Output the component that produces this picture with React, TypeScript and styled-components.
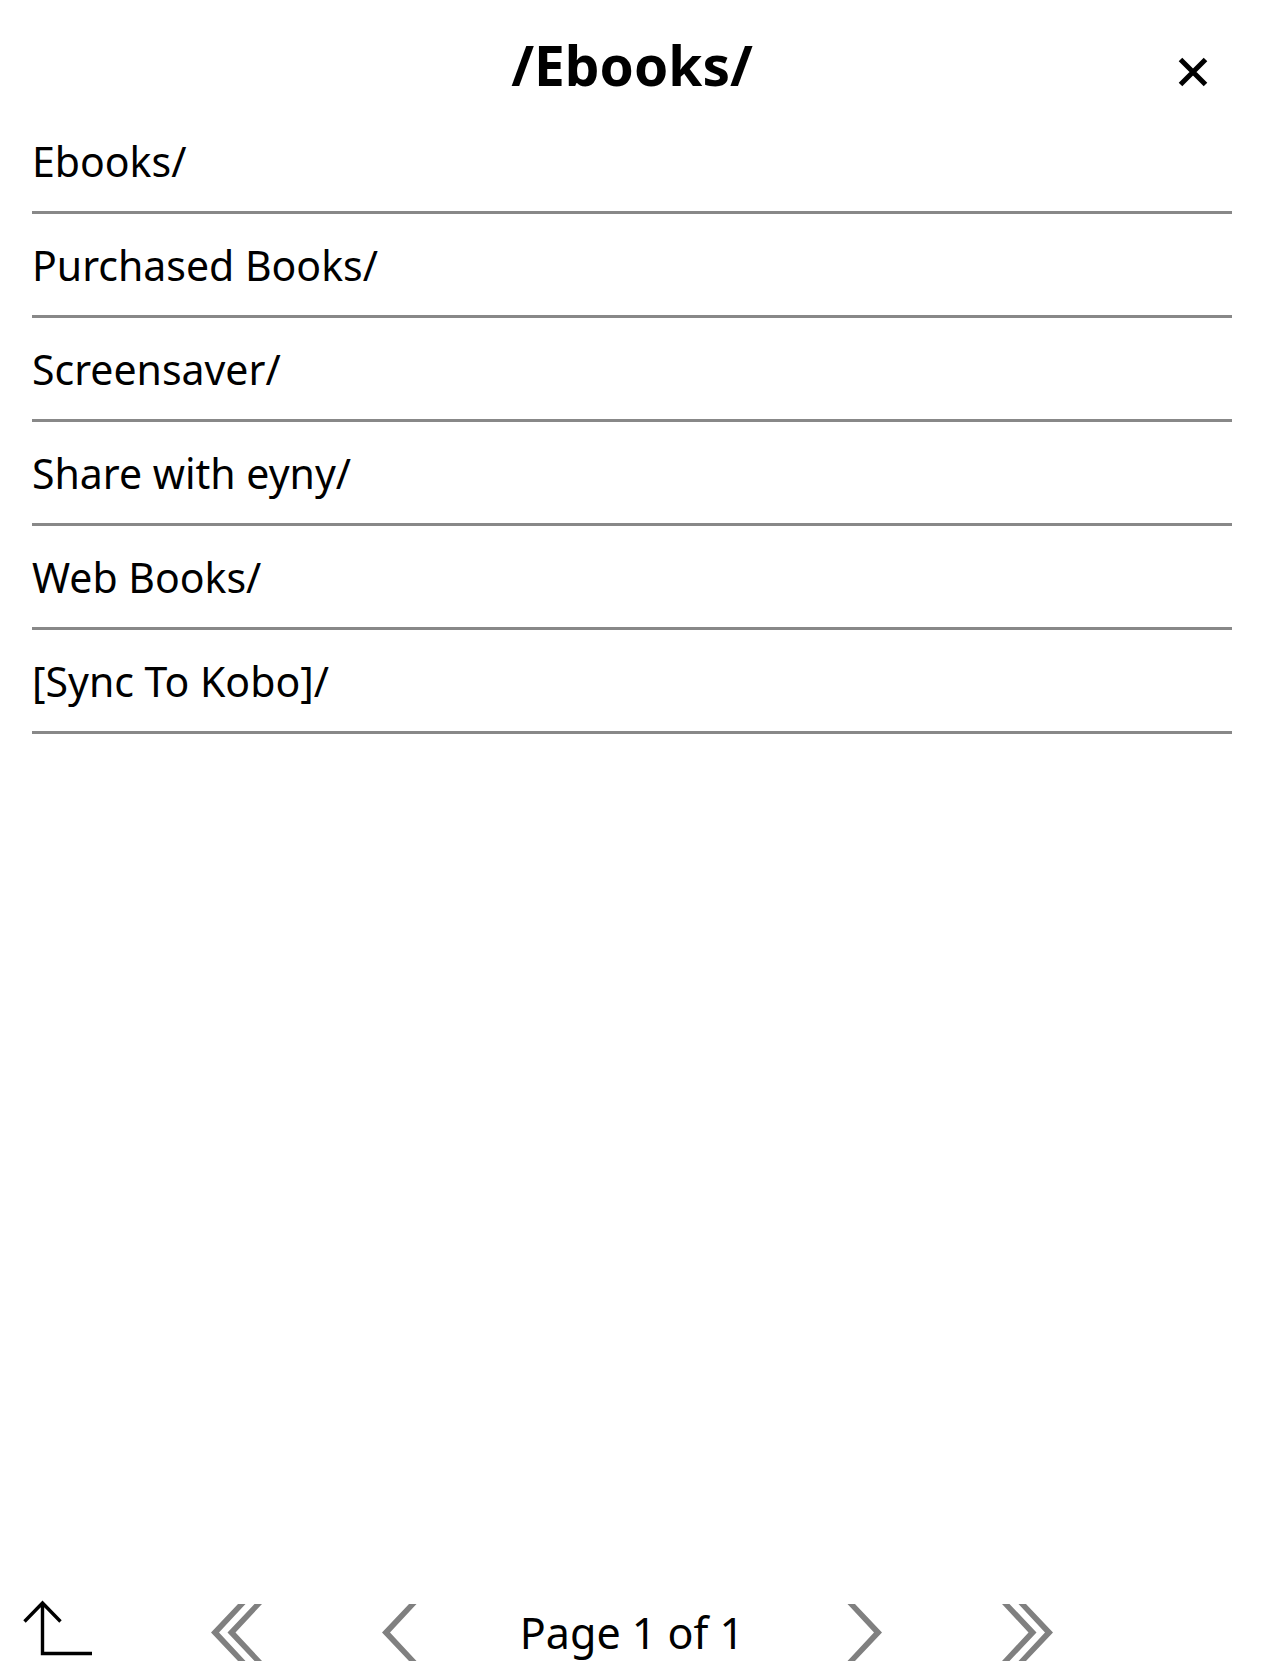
import React from "react";
import styled, { createGlobalStyle } from "styled-components";

const GlobalStyle = createGlobalStyle`
  * { box-sizing: border-box; }
  body { margin: 0; background: #fff; color: #000; font-family: "Noto Sans", sans-serif; }
`;

const Page = styled.div`
  display: flex;
  flex-direction: column;
  min-height: 100vh;
`;

const Header = styled.header`
  display: grid;
  grid-template-columns: 80px 1fr 80px;
  align-items: center;
  height: 110px;
  padding: 20px 32px 0;
`;

const Title = styled.h1`
  grid-column: 2;
  margin: 0;
  text-align: center;
  font-size: 55px;
  line-height: 76px;
  font-weight: 700;
`;

const BaseButton = styled.button`
  margin: 0;
  padding: 0;
  border: 0;
  background: none;
  color: inherit;
  font: inherit;
  cursor: pointer;
`;

const IconButton = styled(BaseButton)`
  display: flex;
  align-items: center;
  justify-content: center;
  height: 72px;
`;

const CloseButton = styled(IconButton)`
  padding: 14px 0 0 2px;
`;

const UpButton = styled(IconButton)`
  justify-content: flex-start;
  padding-left: 23px;
`;

const Icon = styled.svg`
  display: block;
  fill: none;
  stroke: #000;
`;

const PagerIcon = styled.svg`
  display: block;
  fill: #808080;
`;

const List = styled.ul`
  flex: 1;
  list-style: none;
  margin: 0;
  padding: 0 32px;
`;

const Row = styled.li`
  border-bottom: 3px solid #888;
`;

const RowButton = styled(BaseButton)`
  display: block;
  width: 100%;
  padding: 23px 0 22px;
  text-align: left;
  font-size: 41px;
  line-height: 56px;
`;

const Footer = styled.footer`
  display: grid;
  grid-template-columns: 155px 163px 163px 1fr 163px 163px 155px;
  align-items: center;
  height: 95px;
`;

const PageButton = styled(BaseButton)`
  text-align: center;
  font-size: 43px;
  line-height: 56px;
`;

const folders = ["Ebooks/", "Purchased Books/", "Screensaver/", "Share with eyny/", "Web Books/", "[Sync To Kobo]/"];

function Chevron({ double = false, forward = false }: { double?: boolean; forward?: boolean }) {
  const width = double ? 51 : 35;
  const shape = "M27 0H34.5L8 28.5L34.5 57H27L0 28.5Z";
  return (
    <PagerIcon width={width} height={57} aria-hidden="true">
      <g transform={forward ? `translate(${width} 0) scale(-1 1)` : undefined}>
        <path d={shape} />
        {double && <path d={shape} transform="translate(16.5 0)" />}
      </g>
    </PagerIcon>
  );
}

export default function App() {
  return (
    <Page>
      <GlobalStyle />
      <Header>
        <Title>/Ebooks/</Title>
        <CloseButton aria-label="Close">
          <Icon width={30} height={30} strokeWidth={5} aria-hidden="true">
            <path d="M2.5 2.5 27.5 27.5M27.5 2.5 2.5 27.5" />
          </Icon>
        </CloseButton>
      </Header>
      <List>
        {folders.map((name) => (
          <Row key={name}><RowButton>{name}</RowButton></Row>
        ))}
      </List>
      <Footer>
        <UpButton aria-label="Up one folder">
          <Icon width={70} height={65} strokeWidth={3.4} aria-hidden="true">
            <path d="M1.5 21.5 19.5 3 37.5 21.5M19.5 3V53.5H69" />
          </Icon>
        </UpButton>
        <IconButton aria-label="First page"><Chevron double /></IconButton>
        <IconButton aria-label="Previous page"><Chevron /></IconButton>
        <PageButton>Page 1 of 1</PageButton>
        <IconButton aria-label="Next page"><Chevron forward /></IconButton>
        <IconButton aria-label="Last page"><Chevron double forward /></IconButton>
      </Footer>
    </Page>
  );
}
